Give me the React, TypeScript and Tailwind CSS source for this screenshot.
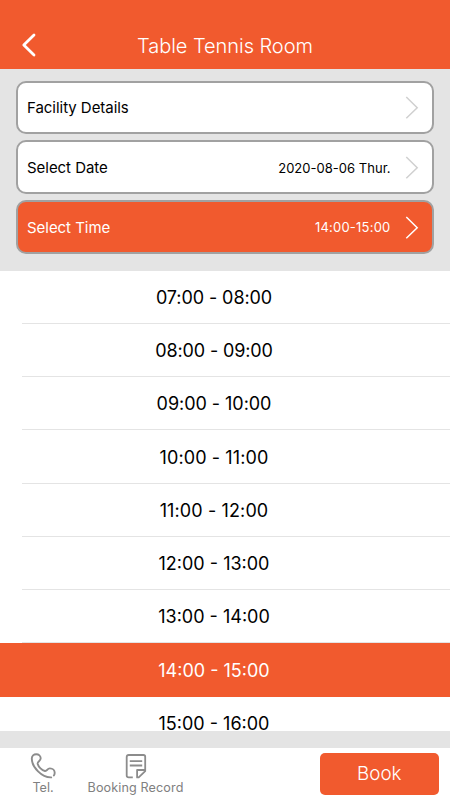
const slots = [
  { label: "07:00 - 08:00", tracking: "tracking-[-0.08px]" },
  { label: "08:00 - 09:00", tracking: "tracking-[-0.12px]" },
  { label: "09:00 - 10:00", tracking: "tracking-[-0.04px]" },
  { label: "10:00 - 11:00", tracking: "tracking-[0.1px]" },
  { label: "11:00 - 12:00", tracking: "tracking-[0.12px]" },
  { label: "12:00 - 13:00", tracking: "tracking-[0px]" },
  { label: "13:00 - 14:00", tracking: "tracking-[0px]" },
  { label: "14:00 - 15:00", tracking: "tracking-[0px]", selected: true },
  { label: "15:00 - 16:00", tracking: "tracking-[0px]" },
];

function Chevron({ color }: { color: string }) {
  return (
    <svg width="14" height="24" viewBox="0 0 14 24" fill="none" className={color}>
      <path d="M1.3 2 12.2 12.7 1.3 23.2" stroke="currentColor" strokeWidth="1.5" />
    </svg>
  );
}

function Card({ label, value, active }: { label: string; value?: string; active?: boolean }) {
  return (
    <button
      className={`flex h-[53.7px] w-full shrink-0 items-center rounded-[10px] border-2 border-[#a1a1a1] pr-[13px] pl-[9px] ${
        active ? "bg-[#f15a2e] text-white" : "bg-white text-black"
      }`}
    >
      <span className="pt-[2px] text-[15px] leading-5 tracking-[-0.04px]">{label}</span>
      <span className={`mr-[14px] ml-auto pt-px text-[13px] leading-5 ${active ? "tracking-[0.22px]" : "tracking-[0.02px]"}`}>{value}</span>
      <Chevron color={active ? "text-white" : "text-[#d0d0d0]"} />
    </button>
  );
}

export default function App() {
  return (
    <div className="flex h-[800px] w-[450px] flex-col overflow-hidden bg-white font-['Inter','Liberation_Sans',sans-serif] font-normal">
      <header className="grid h-[69px] shrink-0 grid-cols-[60px_1fr_60px] items-end bg-[#f15a2e] pb-[8px] text-white">
        <button className="flex h-[32px] items-center pl-[20.5px]">
          <svg width="16" height="24" viewBox="0 0 16 24" fill="none">
            <path d="M13 2 2.8 12l10.2 10" stroke="currentColor" strokeWidth="2.8" strokeLinecap="round" strokeLinejoin="round" />
          </svg>
        </button>
        <h1 className="text-center text-[20px] leading-[30px] font-[350] tracking-[-0.05px]">Table Tennis Room</h1>
      </header>

      <section className="flex h-[201.5px] shrink-0 flex-col gap-[6px] bg-[#e4e4e4] pt-[11.5px] pr-[16.5px] pl-4">
        <Card label="Facility Details" />
        <Card label="Select Date" value="2020-08-06 Thur." />
        <Card label="Select Time" value="14:00-15:00" active />
      </section>

      <ul className="flex h-[460.5px] shrink-0 flex-col overflow-hidden">
        {slots.map((slot) => (
          <li
            key={slot.label}
            className={`h-[53.25px] shrink-0 ${slot.selected ? "bg-[#f15a2e] text-white" : "pl-[22px] text-black"}`}
          >
            <div
              className={`flex h-full items-center justify-center border-b pt-[1.5px] text-[18px] ${slot.tracking} ${
                slot.selected ? "border-[#f15a2e] pr-[22px]" : "border-[#e4e4e4] pr-[44px]"
              }`}
            >
              {slot.label}
            </div>
          </li>
        ))}
      </ul>

      <div className="h-[17px] shrink-0 bg-[#e4e4e4]" />

      <footer className="flex h-[52px] shrink-0 items-start bg-white pt-[5px] pr-[11px] text-[#808080]">
        <button className="ml-[28px] flex w-[30px] flex-col items-center">
          <svg width="26" height="26" viewBox="0 0 26 26" fill="none" stroke="#8c8c8c" strokeWidth="1.9" strokeLinecap="round">
            <path d="M21.2 24.4C12 24.8 1.8 14.3 1.8 5.6 1.8 3 3.7 1.2 6.3 1.2c2.4 0 4.4 1.7 4.4 4.1 0 3-3.6 3-3 5.7.8 3 4.3 6.5 7.2 7 2.5.4 2-2.6 5-2.6 2.9 0 4.8 2 4.8 4.3 0 1.2-.2 2-.8 2.8" />
          </svg>
          <span className="pt-px text-[12.6px] leading-[15px]">Tel.</span>
        </button>
        <button className="flex w-[156px] flex-col items-center">
          <svg width="22" height="26" viewBox="0 0 22 26" fill="none" stroke="#8c8c8c" strokeWidth="1.8">
            <path d="M7.8 24.4H3.7Q1.7 24.4 1.7 22.4V4Q1.7 2 3.7 2h14.8q1.7 0 1.7 1.7V18.2l-6.5 6.2h-1.6V17h8" strokeLinejoin="round" />
            <path d="M4.8 8.2h12.4M4.8 12.5h12.4" />
          </svg>
          <span className="pt-px pr-px text-[12.6px] leading-[15px] tracking-[0.12px] whitespace-nowrap">Booking Record</span>
        </button>
        <button className="ml-auto h-[42px] w-[119.5px] rounded-[5px] bg-[#f15a2e] pt-px text-[18.8px] font-[350] text-white">Book</button>
      </footer>
    </div>
  );
}
